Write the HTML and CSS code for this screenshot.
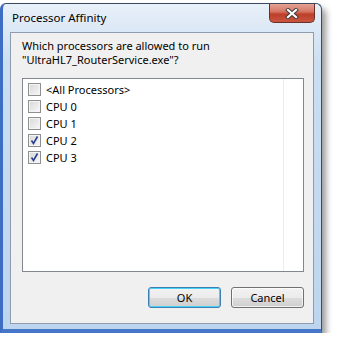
FILE: index.html
```html
<!DOCTYPE html>
<html lang="en">
<head>
    <meta charset="UTF-8">
    <title>Processor Affinity</title>
    <link rel="stylesheet" href="styles.css">
</head>
<body>
    <div class="window">
        <div class="titlebar">
            <span class="title">Processor Affinity</span>
            <div class="close">
                <svg width="14" height="11" viewBox="0 0 14 11">
                    <path d="M3 2 L11 9 M11 2 L3 9" stroke="#3a3a3a" stroke-width="4" stroke-linecap="square"/>
                    <path d="M3 2 L11 9 M11 2 L3 9" stroke="#ffffff" stroke-width="2.2" stroke-linecap="square"/>
                </svg>
            </div>
        </div>

        <div class="client">
            <p class="question">Which processors are allowed to run<br>"UltraHL7_RouterService.exe"?</p>

            <ul class="cpu-list">
                <li><span class="check"></span>&lt;All Processors&gt;</li>
                <li><span class="check"></span>CPU 0</li>
                <li><span class="check"></span>CPU 1</li>
                <li><span class="check checked"><svg width="11" height="11" viewBox="0 0 11 11"><path d="M2.5 5.5 L4.5 8.5 L8.5 1.5" fill="none" stroke="#2a3f8f" stroke-width="1.6"/></svg></span>CPU 2</li>
                <li><span class="check checked"><svg width="11" height="11" viewBox="0 0 11 11"><path d="M2.5 5.5 L4.5 8.5 L8.5 1.5" fill="none" stroke="#2a3f8f" stroke-width="1.6"/></svg></span>CPU 3</li>
            </ul>

            <div class="buttons">
                <button class="btn default">OK</button>
                <button class="btn">Cancel</button>
            </div>
        </div>
    </div>
</body>
</html>
```

FILE: styles.css
```css
body {
    margin: 0;
    background: #fff;
    font-family: "Noto Sans", "Open Sans", sans-serif;
    font-size: 11px;
    color: #000;
}

.window {
    margin-top: 3px;
    width: 322px;
    height: 330px;
    box-sizing: border-box;
    border: 1px solid #3a4b62;
    border-left: 3px solid #3e6ec3;
    border-bottom: 4px solid #4676c8;
    border-radius: 6px 6px 0 0;
    background: linear-gradient(#e9f0f8, #cbdef2 60px, #bdd5ef);
    box-shadow: 4px 5px 6px rgba(0, 0, 0, 0.4);
    padding: 0 7px 5px 7px;
    display: flex;
    flex-direction: column;
}

.titlebar {
    height: 28px;
    display: flex;
    justify-content: space-between;
    align-items: flex-start;
}

.title {
    font-size: 11.5px;
    padding: 6px 0 0 2px;
}

.close {
    width: 46px;
    height: 19px;
    box-sizing: border-box;
    margin-right: -1px;
    border: 1px solid #6a3027;
    border-top: none;
    border-radius: 0 0 5px 5px;
    background: linear-gradient(#e6a193, #d67a68 40%, #bd3f2a 58%, #c95640);
    display: flex;
    align-items: center;
    justify-content: center;
}

.client {
    flex: 1;
    background: #f0f0f0;
    border: 1px solid #8e9cad;
    padding: 6px 11px 0 11px;
}

.question {
    margin: 0;
    line-height: 14px;
}

.cpu-list {
    list-style-type: none;
    margin: 11px 0 0 0;
    padding: 2px 5px;
    width: 282px;
    height: 194px;
    box-sizing: border-box;
    border: 1px solid #828790;
    background: linear-gradient(to right, transparent 260px, #e4edf8 260px, #e4edf8 261px, transparent 261px), #fff;
}

.cpu-list li {
    height: 17px;
    display: flex;
    align-items: center;
}

.check {
    width: 13px;
    height: 13px;
    box-sizing: border-box;
    margin-right: 5px;
    border: 1px solid #8e8f8f;
    box-shadow: inset 0 0 0 1px #f4f4f4;
    background: linear-gradient(135deg, #d8d8d8, #f8f8f8);
    display: flex;
    align-items: center;
    justify-content: center;
}

.buttons {
    margin-top: 15px;
    width: 282px;
    display: flex;
    justify-content: flex-end;
    gap: 10px;
}

.btn {
    width: 73px;
    height: 21px;
    padding: 0;
    font-family: inherit;
    font-size: 11px;
    color: #000;
    border: 1px solid #707070;
    border-radius: 3px;
    background: linear-gradient(#f2f2f2, #ebebeb 50%, #dddddd 50%, #cfcfcf);
    box-shadow: inset 0 0 0 1px rgba(255, 255, 255, 0.7);
}

.btn.default {
    border-color: #3c7fb1;
    box-shadow: inset 0 0 0 1px #48d0f6;
}
```
